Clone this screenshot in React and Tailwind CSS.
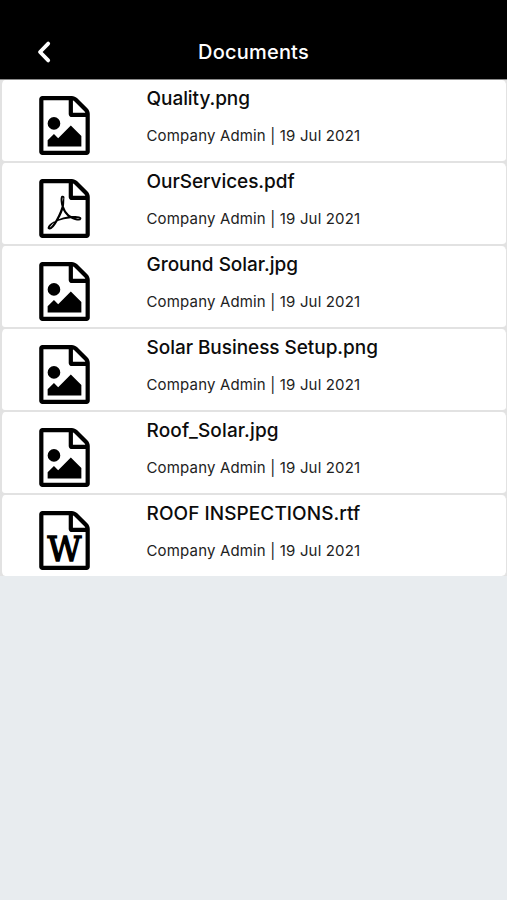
const documents = [
  { name: "Quality.png", type: "image", spacing: "tracking-[-0.06px]" },
  { name: "OurServices.pdf", type: "pdf", spacing: "tracking-[-0.06px]" },
  { name: "Ground Solar.jpg", type: "image", spacing: "tracking-[-0.03px]" },
  { name: "Solar Business Setup.png", type: "image", spacing: "tracking-[-0.05px]" },
  { name: "Roof_Solar.jpg", type: "image", spacing: "tracking-[0.14px]" },
  { name: "ROOF INSPECTIONS.rtf", type: "word", spacing: "tracking-[0.07px]" },
];

const sheet =
  "M1596 380q28 28 48 76t20 88v1152q0 40-28 68t-68 28h-1344q-40 0-68-28t-28-68v-1600q0-40 28-68t68-28h896q40 0 88 20t76 48zm-444-244v376h376q-10-29-22-41l-313-313q-12-12-41-22zm384 1528v-1024h-416q-40 0-68-28t-28-68v-416h-768v1536h1280z";

const marks = {
  image:
    "m-128-448v320h-1024v-192l192-192 128 128 384-384zm-832-192q-80 0-136-56t-56-136 56-136 136-56 136 56 56 136-56 136-136 56z",
  pdf: "m-514-593q33 26 84 56 59-7 117-7 147 0 177 49 16 22 2 52 0 1-1 2l-2 2v1q-6 38-71 38-48 0-115-20t-130-53q-221 24-392 83-153 262-242 262-15 0-28-7l-24-12q-1-1-6-5-10-10-6-36 9-40 56-91.5t132-96.5q14-9 23 6 2 2 2 4 52-85 107-197 68-136 104-262-24-82-30.5-159.5t6.5-127.5q11-40 42-40h22q23 0 35 15 18 21 9 68-2 6-4 8 1 3 1 8v30q-2 123-14 192 55 164 146 238zm-576 411q52-24 137-158-51 40-87.5 84t-49.5 74zm398-920q-15 42-2 132 1-7 7-44 0-3 7-43 1-4 4-8-1-1-1-2-1-2-1-3-1-22-13-36 0 1-1 2v2zm-124 661q135-54 284-81-2-1-13-9.5t-16-13.5q-76-67-127-176-27 86-83 197-30 56-45 83zm646-16q-24-24-140-24 76 28 124 28 14 0 18-1 0-1-2-3z",
  word: "",
};

const FileIcon = ({ type }) => {
  return (
    <svg viewBox="128 0 1536 1792" className="w-[51px] h-[59px] shrink-0" fill="#000">
      <path d={sheet + marks[type]} />
      {type === "word" && (
        <text
          x="896"
          y="1520"
          textAnchor="middle"
          textLength="1030"
          lengthAdjust="spacingAndGlyphs"
          fontSize="990"
          stroke="#000"
          strokeWidth="42"
          fontFamily="'DejaVu Serif', serif"
        >
          W
        </text>
      )}
    </svg>
  );
};

const DocumentRow = ({ name, type, spacing }) => {
  return (
    <li className="flex h-[83px] last:h-[81px] bg-white border-b-2 last:border-b-0 border-l-2 border-r border-[#e2e2e2] rounded-[5px] pl-[37px] pt-4">
      <FileIcon type={type} />
      <div className="ml-[56.5px] -mt-[9px] whitespace-nowrap">
        <h2 className={`text-[19px] leading-6 font-medium text-[#0c0c0c] ${spacing}`}>
          {name}
        </h2>
        <p className="mt-[15px] text-[15px] leading-5 text-[#222] tracking-[0.16px]">
          Company Admin | 19 Jul 2021
        </p>
      </div>
    </li>
  );
};

const App = () => {
  return (
    <div className="w-full h-screen bg-[#e8ecef] font-['Inter','Liberation_Sans',sans-serif] overflow-hidden">
      <header className="grid grid-cols-3 items-center h-20 bg-black text-white pt-6 border-b border-[#8a8a8a]">
        <button className="ml-[36px] w-4 h-6" aria-label="Back">
          <svg viewBox="0 0 16 24" className="w-4 h-6" fill="none">
            <path
              d="M12.2 3.6L4 12l8.2 8.4"
              stroke="#fff"
              strokeWidth="3.8"
              strokeLinecap="round"
              strokeLinejoin="round"
            />
          </svg>
        </button>
        <h1 className="text-[20px] leading-6 font-medium text-center tracking-[0.2px]">
          Documents
        </h1>
      </header>
      <ul className="bg-[#e2e2e2]">
        {documents.map((doc) => (
          <DocumentRow key={doc.name} {...doc} />
        ))}
      </ul>
    </div>
  );
};

export default App;
